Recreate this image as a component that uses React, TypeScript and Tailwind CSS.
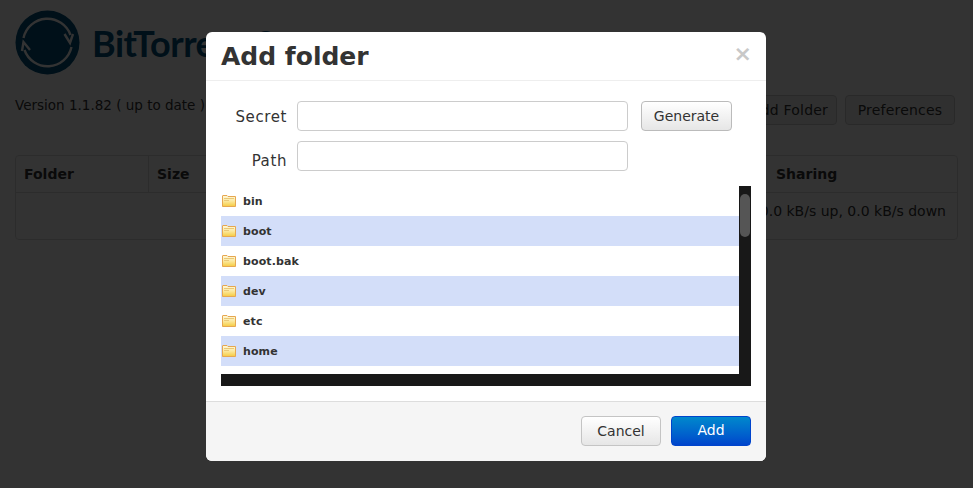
import React from 'react';

const folders = ['bin', 'boot', 'boot.bak', 'dev', 'etc', 'home'];

function FolderIcon() {
  return (
    <svg width="14" height="12" viewBox="0 0 14 12" className="shrink-0">
      <defs>
        <linearGradient id="folderFill" x1="0" y1="0" x2="0" y2="1">
          <stop offset="0" stopColor="#fff8dc" />
          <stop offset="0.5" stopColor="#fbe9a0" />
          <stop offset="1" stopColor="#f6cb3f" />
        </linearGradient>
      </defs>
      <path d="M0.5 11.5V1a.5.5 0 0 1 .5-.5h4l1 1h7.5v10z" fill="url(#folderFill)" stroke="#e6a750" />
      <rect x="2" y="3" width="10" height="1" fill="#e9c877" />
      <rect x="2" y="5" width="5" height="1" fill="#e9c877" />
    </svg>
  );
}

function Logo() {
  return (
    <svg width="65" height="65" viewBox="0 0 65 65" className="shrink-0">
      <circle cx="32.5" cy="32.5" r="32" fill="#00507c" />
      <g fill="none" stroke="#fff" strokeWidth="2.4">
        <path d="M8.5 28 A24.5 24.5 0 0 1 55.5 25" />
        <path d="M49.5 24 L55 33 L58 24" />
        <path d="M56.5 37 A24.5 24.5 0 0 1 9.5 40" />
        <path d="M15 40 L8.5 32 L7 41" />
      </g>
    </svg>
  );
}

export default function App() {
  return (
    <div className="relative h-[488px] w-[973px] overflow-hidden bg-white font-['DejaVu_Sans',sans-serif] text-[#333]">
      <div className="px-[15px] pt-[10px]">
        <div className="flex items-center gap-[12px]">
          <Logo />
          <span className="font-['Lato',sans-serif] text-[36px] font-bold tracking-[-0.5px] text-[#00507c]">BitTorrent Sync</span>
        </div>
        <div className="mt-[20px] flex items-start justify-between">
          <p className="text-[13.5px] leading-5">Version 1.1.82 ( up to date )</p>
          <div className="flex gap-2 pr-[3px]">
            <button className="h-[30px] w-[100px] rounded border border-[#ccc] bg-[#f0f0f0] pr-[8px] text-right text-[14px] tracking-[0.2px]">Add Folder</button>
            <button className="h-[30px] w-[110px] rounded border border-[#ccc] bg-[#f0f0f0] text-[14px] tracking-[0.2px]">Preferences</button>
          </div>
        </div>
        <div className="mt-[30px] w-[943px] rounded border border-[#ddd] text-[14px]">
          <div className="grid h-[37px] grid-cols-[133px_120px_1fr_181px] items-center border-b border-[#ddd] font-bold">
            <div className="flex h-full items-center border-r border-[#ddd] pl-2">Folder</div>
            <div className="pl-2">Size</div>
            <div />
            <div>Sharing</div>
          </div>
          <div className="flex h-[46px] items-start justify-end pr-[11px] pt-[8px]">0.0 kB/s up, 0.0 kB/s down</div>
        </div>
      </div>

      <div className="absolute inset-0 bg-black/80" />

      <div className="absolute left-[206px] top-[32px] flex h-[429px] w-[560px] flex-col rounded-md bg-white">
        <div className="flex h-[49px] items-center justify-between border-b border-[#eee] pl-[15px] pr-[14px]">
          <h3 className="mt-[2px] text-[25px] font-bold leading-8 text-[#333]">Add folder</h3>
          <span className="mb-[5px] text-[22px] font-bold leading-none text-[#c8c8c8]">×</span>
        </div>
        <div className="flex flex-1 flex-col px-[15px] pt-[20px]">
          <div className="flex items-center">
            <label className="w-[66px] pt-px text-right text-[15px] leading-[22px] tracking-[0.6px] text-[#333]">Secret</label>
            <input className="ml-[10px] h-[30px] w-[331px] rounded border border-[#ccc] bg-white" />
            <button className="ml-[13px] h-[30px] w-[91px] rounded border border-[#bbb] bg-gradient-to-b from-white to-[#e6e6e6] text-[14px] text-[#333]">Generate</button>
          </div>
          <div className="mt-[10px] flex items-center">
            <label className="w-[66px] pt-[10px] text-right text-[15px] leading-[20px] tracking-[0.6px] text-[#333]">Path</label>
            <input className="ml-[10px] h-[30px] w-[331px] rounded border border-[#ccc] bg-white" />
          </div>
          <div className="mt-[15px] flex h-[200px] w-[530px] flex-col">
            <div className="flex h-[188px]">
              <div className="flex-1">
                {folders.map((name, i) => (
                  <div key={name} className={`flex h-[30px] items-center gap-[7px] pl-px text-[11px] font-bold tracking-[0.1px] text-[#333] ${i % 2 === 1 ? 'bg-[#d3def9]' : ''}`}>
                    <FolderIcon />
                    <span className="pt-[3px]">{name}</span>
                  </div>
                ))}
              </div>
              <div className="w-[12px] bg-[#181818] pt-2">
                <div className="mx-px h-[43px] rounded-full bg-[#555]" />
              </div>
            </div>
            <div className="h-[12px] bg-[#181818]" />
          </div>
        </div>
        <div className="flex h-[60px] items-center justify-end gap-[10px] rounded-b-md border-t border-[#ddd] bg-[#f5f5f5] pb-[2px] pr-[15px]">
          <button className="h-[30px] w-[80px] rounded border border-[#c4c4c4] bg-gradient-to-b from-white to-[#e6e6e6] pt-px text-[14px] text-[#333]">Cancel</button>
          <button className="h-[30px] w-[80px] rounded border border-[#04c] bg-gradient-to-b from-[#0088cc] to-[#0044cc] text-[14px] text-white">Add</button>
        </div>
      </div>
    </div>
  );
}
